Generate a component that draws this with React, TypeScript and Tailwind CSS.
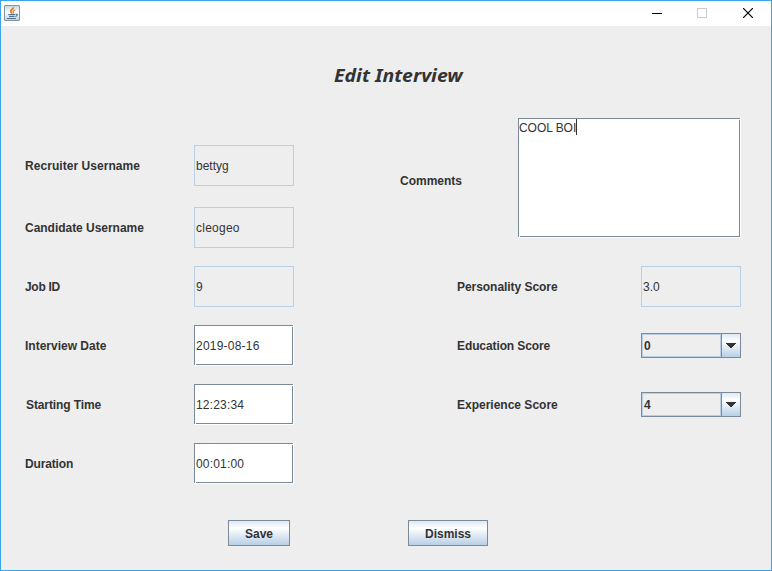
import type { ReactNode } from "react";

function JavaIcon() {
  return (
    <svg width="16" height="16" viewBox="0 0 16 16" fill="none" className="-mt-[3px]">
      <defs>
        <linearGradient id="cup" x1="0" y1="0" x2="0" y2="1">
          <stop offset="0" stopColor="#c3d3df" />
          <stop offset="0.45" stopColor="#ffffff" />
          <stop offset="1" stopColor="#bccfdd" />
        </linearGradient>
      </defs>
      <rect x="0.5" y="0.5" width="15" height="15" rx="0.5" fill="url(#cup)" stroke="#7f95a6" />
      <path d="M9.300 2.200c.6 2-3.300 2.600-2.600 4.300.3.800 1 1.200 1.200 2.200" stroke="#e8761c" strokeWidth="1.700" />
      <path d="M11.300 4.900c-1.700.5-2.600 1.200-1.900 2.100.4.600 0 1.100-.7 1.700" stroke="#ee8b37" strokeWidth="1.300" />
      <path d="M4.300 9.700h6.700M5 11.500h5.500M3 13.500h9" stroke="#4c7290" strokeWidth="1.200" />
      <path d="M11.500 9.300c2.500-.5 2.300 1.700-.2 2.200" stroke="#4c7290" strokeWidth="1.200" />
    </svg>
  );
}

function TitleBar() {
  return (
    <header className="flex h-[25px] items-start bg-white pl-[3px] pr-[18px] pt-[7px]">
      <JavaIcon />
      <svg width="10" height="10" shapeRendering="crispEdges" className="ml-auto">
        <path d="M0 5.500h10" stroke="#000" />
      </svg>
      <svg width="10" height="10" shapeRendering="crispEdges" className="ml-[35px]">
        <rect x="0.5" y="0.5" width="9" height="9" fill="none" stroke="#ccc" />
      </svg>
      <svg width="10" height="10" viewBox="0 0 10 10" className="ml-[36px]">
        <path d="M0 0l10 10M10 0L0 10" stroke="#000" strokeWidth="1.200" />
      </svg>
    </header>
  );
}

function Bevel({ className, children }: { className: string; children: ReactNode }) {
  return (
    <div className={`flex shrink-0 border-b border-r border-white ${className}`}>
      <div className="relative flex grow border border-[#7a8a99] bg-white">
        {children}
        <i className="absolute -right-px top-0 size-px bg-white" />
        <i className="absolute -bottom-px left-0 size-px bg-white" />
      </div>
    </div>
  );
}

function TextField({ value, locked, valueClass = "" }: { value: string; locked?: boolean; valueClass?: string }) {
  if (locked) {
    return (
      <div className="flex h-[41px] w-[100px] shrink-0 items-center border border-[#b8cfe5] pl-px pt-[2px]">
        <span className={valueClass}>{value}</span>
      </div>
    );
  }
  return (
    <Bevel className="h-[41px] w-[100px]">
      <div className="flex items-center pl-px pt-[3px]">
        <span className={valueClass}>{value}</span>
      </div>
    </Bevel>
  );
}

function ComboBox({ value }: { value: string }) {
  return (
    <div className="flex h-[25px] w-[100px] shrink-0 border border-[#7a8a99]">
      <div className="flex grow items-center border border-[#b8cfe5] pl-px pt-[2px] font-bold">{value}</div>
      <div className="flex w-[19px] items-center justify-center border-l border-[#7a8a99] bg-linear-to-b from-[#dde8f3] via-white via-30% to-[#b8cfe5]">
        <svg width="10" height="5" shapeRendering="crispEdges">
          <path d="M0 0h10v1H9v1H8v1H7v1H6v1H4V4H3V3H2V2H1V1H0z" fill="#333" />
        </svg>
      </div>
    </div>
  );
}

function Row({ label, className = "", labelClass = "", children }: { label: string; className?: string; labelClass?: string; children: ReactNode }) {
  return (
    <div className={`flex items-center ${className}`}>
      <span className={`grow whitespace-nowrap font-bold ${labelClass || "pt-[2px]"}`}>{label}</span>
      {children}
    </div>
  );
}

function Button({ className, children }: { className: string; children: ReactNode }) {
  return (
    <button className={`h-[26px] border border-[#7a8a99] bg-linear-to-b from-[#dde8f3] via-white via-30% to-[#b8cfe5] pt-[2px] font-bold ${className}`}>
      {children}
    </button>
  );
}

export default function App() {
  return (
    <div className="h-[571px] w-[772px] overflow-hidden border border-[#3aa5ea] bg-[#eee] font-['Liberation_Sans',Arial,sans-serif] text-[12px] leading-[15px] text-[#333]">
      <TitleBar />
      <h1 className="h-[92px] pl-[333px] pt-[37px] font-['Noto_Sans',sans-serif] text-[18px] leading-[25px] font-bold italic">
        <span className="inline-block origin-left scale-x-[1.08]">Edit Interview</span>
      </h1>
      <main className="flex h-[366px] pl-6">
        <section className="flex w-[269px] flex-col gap-[18px] pt-[27px]">
          <Row label="Recruiter Username" labelClass="pt-[2px] tracking-[0.05px]" className="mb-[3px]">
            <TextField value="bettyg" locked />
          </Row>
          <Row label="Candidate Username" labelClass="pt-[2px] tracking-[-0.03px]">
            <TextField value="cleogeo" locked valueClass="tracking-[0.25px]" />
          </Row>
          <Row label="Job ID" labelClass="pt-[2px] tracking-[-0.3px]">
            <TextField value="9" locked />
          </Row>
          <Row label="Interview Date">
            <TextField value="2019-08-16" valueClass="tracking-[0.22px]" />
          </Row>
          <Row label="Starting Time" labelClass="pl-px pt-[2px] tracking-[-0.1px]">
            <TextField value="12:23:34" valueClass="tracking-[0.18px]" />
          </Row>
          <Row label="Duration" labelClass="pt-[2px] tracking-[-0.15px]">
            <TextField value="00:01:00" valueClass="tracking-[0.18px]" />
          </Row>
        </section>
        <section className="ml-[106px] flex w-[341px] flex-col">
          <Row label="Comments" labelClass="pt-[7px]">
            <Bevel className="h-[120px] w-[223px]">
              <span className="h-4 whitespace-nowrap border-r border-[#333] pt-[2px] tracking-[-0.05px]">COOL BOI</span>
            </Bevel>
          </Row>
          <div className="flex flex-col gap-[18px] pl-[57px] pt-[28px]">
            <Row label="Personality Score" labelClass="pt-[2px] tracking-[-0.05px]" className="h-[41px]">
              <TextField value="3.0" locked />
            </Row>
            <Row label="Education Score" labelClass="pt-[2px] tracking-[-0.1px]" className="h-[41px]">
              <ComboBox value="0" />
            </Row>
            <Row label="Experience Score" className="h-[41px]">
              <ComboBox value="4" />
            </Row>
          </div>
        </section>
      </main>
      <footer className="flex gap-[118px] pl-[227px] pt-[36px]">
        <Button className="w-[62px]">Save</Button>
        <Button className="w-[80px]">Dismiss</Button>
      </footer>
    </div>
  );
}
